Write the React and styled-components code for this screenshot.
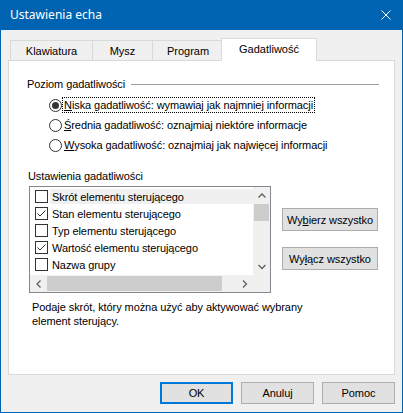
import React from "react";
import styled, { createGlobalStyle } from "styled-components";

const GlobalStyle = createGlobalStyle`
  html, body { margin: 0; padding: 0; background: #ffffff; }
  body {
    font-family: "Liberation Sans", Arial, sans-serif;
    font-size: 11px;
    color: #000;
  }
  * { box-sizing: border-box; }
`;

const Window = styled.div`
  width: 403px;
  height: 413px;
  border: 1px solid #0063b1;
  border-top: none;
  background: #f0f0f0;
  display: flex;
  flex-direction: column;
  overflow: hidden;
`;

const TitleBar = styled.div`
  height: 30px;
  flex-shrink: 0;
  background: #0063b1;
  color: #fff;
  display: flex;
  align-items: center;
  justify-content: space-between;
  padding: 0 11px 1px 9px;
  font-family: "Segoe UI", "Noto Sans", sans-serif;
  font-size: 12px;
`;

const Body = styled.div`
  flex: 1;
  display: flex;
  flex-direction: column;
  padding: 8px 7px 0 7px;
`;

const TabStrip = styled.div`
  display: flex;
  align-items: flex-end;
  height: 22px;
  padding-left: 2px;
`;

const Tab = styled.div`
  position: relative;
  z-index: ${(p) => (p.$sel ? 1 : 0)};
  width: ${(p) => p.$w}px;
  height: ${(p) => (p.$sel ? 23 : 20)}px;
  margin-left: ${(p) => (p.$sel ? -3 : -1)}px;
  margin-right: ${(p) => (p.$sel ? -2 : 0)}px;
  margin-bottom: ${(p) => (p.$sel ? -1 : 0)}px;
  padding-bottom: ${(p) => (p.$sel ? 3 : 0)}px;
  border: 1px solid #d9d9d9;
  border-bottom: none;
  background: ${(p) => (p.$sel ? "#ffffff" : "#f0f0f0")};
  display: flex;
  align-items: center;
  justify-content: center;
  white-space: nowrap;
  &:first-child { margin-left: 0; }
`;

const Panel = styled.div`
  height: 315px;
  flex-shrink: 0;
  background: #fff;
  border: 1px solid #d9d9d9;
  display: flex;
  flex-direction: column;
  padding: 0 15px 0 18px;
  letter-spacing: -0.08px;
`;

const GroupHeader = styled.div`
  display: flex;
  align-items: center;
  height: 16px;
  margin-top: 15px;
`;

const GroupLine = styled.div`
  flex: 1;
  height: 1px;
  background: #a0a0a0;
  margin-left: 6px;
`;

const RadioList = styled.div`
  display: flex;
  flex-direction: column;
  margin-top: 3px;
  padding-left: 22px;
`;

const RadioRow = styled.div`
  height: 20px;
  display: flex;
  align-items: center;
`;

const RadioCircle = styled.span`
  width: 13px;
  height: 13px;
  border-radius: 50%;
  border: 1px solid #333;
  background: #fff;
  flex-shrink: 0;
  margin-right: 1px;
  display: flex;
  align-items: center;
  justify-content: center;
  &::after {
    content: "";
    display: ${(p) => (p.$on ? "block" : "none")};
    width: 7px;
    height: 7px;
    border-radius: 50%;
    background: #333;
  }
`;

const RadioText = styled.span`
  padding: 0 1px;
  line-height: 14px;
  white-space: nowrap;
  outline: ${(p) => (p.$focus ? "1px dotted #000" : "none")};
`;

const SectionLabel = styled.div`
  margin-top: 14px;
  line-height: 14px;
  padding-left: 1px;
`;

const ListArea = styled.div`
  display: flex;
  margin-top: 3px;
`;

const ListBox = styled.div`
  width: 242px;
  height: 107px;
  margin-left: 2px;
  border: 1px solid #828790;
  background: #fff;
  display: grid;
  grid-template-columns: 1fr 17px;
  grid-template-rows: 1fr 17px;
  flex-shrink: 0;
`;

const Items = styled.div`
  overflow: hidden;
  padding-top: 1px;
`;

const ItemRow = styled.div`
  height: 17px;
  display: flex;
  align-items: center;
  padding-left: 5px;
`;

const CheckBox = styled.span`
  width: 13px;
  height: 13px;
  border: 1px solid #333;
  background: #fff;
  flex-shrink: 0;
  margin-right: 2px;
  display: flex;
  align-items: center;
  justify-content: center;
`;

const ItemText = styled.span`
  flex: 1;
  height: 15px;
  display: flex;
  align-items: center;
  padding-left: 2px;
  white-space: nowrap;
  background: ${(p) => (p.$sel ? "#f0f0f0" : "transparent")};
`;

const VScroll = styled.div`
  background: #f0f0f0;
  display: flex;
  flex-direction: column;
`;

const HScroll = styled.div`
  background: #f0f0f0;
  display: flex;
`;

const Corner = styled.div`
  background: #f0f0f0;
`;

const Arrow = styled.div`
  width: 17px;
  height: 17px;
  flex-shrink: 0;
  display: flex;
  align-items: center;
  justify-content: center;
`;

const Thumb = styled.div`
  background: #cdcdcd;
  ${(p) =>
    p.$vertical
      ? `height: 17px; margin: 0 1px;`
      : `width: 175px; margin: 1px 0;`}
`;

const Spacer = styled.div`
  flex: 1;
`;

const SideButtons = styled.div`
  display: flex;
  flex-direction: column;
  gap: 16px;
  padding-top: 22px;
  margin-left: 11px;
`;

const Button = styled.button`
  width: ${(p) => p.$w}px;
  height: ${(p) => p.$h}px;
  padding: 0;
  background: #e1e1e1;
  border: ${(p) => (p.$default ? "2px solid #0078d7" : "1px solid #adadad")};
  font-family: "Liberation Sans", Arial, sans-serif;
  font-size: 11px;
  letter-spacing: -0.08px;
  color: #000;
  white-space: nowrap;
`;

const Description = styled.p`
  margin: 7px 0 0 5px;
  line-height: 14px;
`;

const Footer = styled.div`
  display: flex;
  justify-content: flex-end;
  gap: 8px;
  padding-top: 7px;
`;

const Chevron = ({ dir }) => {
  const pts = {
    up: "0.5,4.5 4,1 7.5,4.5",
    down: "0.5,1 4,4.5 7.5,1",
    left: "4.5,0.5 1,4 4.5,7.5",
    right: "1,0.5 4.5,4 1,7.5",
  }[dir];
  const vert = dir === "up" || dir === "down";
  return (
    <svg width={vert ? 8 : 6} height={vert ? 6 : 8} viewBox={vert ? "0 0 8 6" : "0 0 6 8"}>
      <polyline points={pts} fill="none" stroke="#606060" strokeWidth="1.3" />
    </svg>
  );
};

const CheckMark = () => (
  <svg width="11" height="11" viewBox="0 0 11 11">
    <polyline points="1.5,5.5 4,8 9.5,2.5" fill="none" stroke="#333" strokeWidth="1" />
  </svg>
);

const tabs = [
  { label: "Klawiatura", w: 83 },
  { label: "Mysz", w: 61 },
  { label: "Program", w: 72 },
  { label: "Gadatliwość", w: 96, sel: true },
];

const radios = [
  { key: "N", rest: "iska gadatliwość: wymawiaj jak najmniej informacji", on: true },
  { key: "Ś", rest: "rednia gadatliwość: oznajmiaj niektóre informacje" },
  { key: "W", rest: "ysoka gadatliwość: oznajmiaj jak najwięcej informacji" },
];

const items = [
  { label: "Skrót elementu sterującego", checked: false, sel: true },
  { label: "Stan elementu sterującego", checked: true },
  { label: "Typ elementu sterującego", checked: false },
  { label: "Wartość elementu sterującego", checked: true },
  { label: "Nazwa grupy", checked: false },
  { label: "", checked: false },
];

export default function App() {
  return (
    <>
      <GlobalStyle />
      <Window>
        <TitleBar>
          <span>Ustawienia echa</span>
          <svg width="10" height="10" viewBox="0 0 10 10">
            <path d="M0.5 0.5 L9.5 9.5 M9.5 0.5 L0.5 9.5" stroke="#fff" strokeWidth="1" />
          </svg>
        </TitleBar>
        <Body>
          <TabStrip>
            {tabs.map((t) => (
              <Tab key={t.label} $w={t.w} $sel={t.sel}>
                {t.label}
              </Tab>
            ))}
          </TabStrip>
          <Panel>
            <GroupHeader>
              <span>Poziom gadatliwości</span>
              <GroupLine />
            </GroupHeader>
            <RadioList>
              {radios.map((r) => (
                <RadioRow key={r.key}>
                  <RadioCircle $on={r.on} />
                  <RadioText $focus={r.on}>
                    <u>{r.key}</u>
                    {r.rest}
                  </RadioText>
                </RadioRow>
              ))}
            </RadioList>
            <SectionLabel>Ustawienia gadatliwości</SectionLabel>
            <ListArea>
              <ListBox>
                <Items>
                  {items.map((it, i) => (
                    <ItemRow key={i}>
                      <CheckBox>{it.checked && <CheckMark />}</CheckBox>
                      <ItemText $sel={it.sel}>{it.label}</ItemText>
                    </ItemRow>
                  ))}
                </Items>
                <VScroll>
                  <Arrow>
                    <Chevron dir="up" />
                  </Arrow>
                  <Thumb $vertical />
                  <Spacer />
                  <Arrow>
                    <Chevron dir="down" />
                  </Arrow>
                </VScroll>
                <HScroll>
                  <Arrow>
                    <Chevron dir="left" />
                  </Arrow>
                  <Thumb />
                  <Spacer />
                  <Arrow>
                    <Chevron dir="right" />
                  </Arrow>
                </HScroll>
                <Corner />
              </ListBox>
              <SideButtons>
                <Button $w={96} $h={23}>
                  Wy<u>b</u>ierz wszystko
                </Button>
                <Button $w={96} $h={23}>
                  Wy<u>ł</u>ącz wszystko
                </Button>
              </SideButtons>
            </ListArea>
            <Description>
              Podaje skrót, który można użyć aby aktywować wybrany
              <br />
              element sterujący.
            </Description>
          </Panel>
          <Footer>
            <Button $w={73} $h={22} $default>
              OK
            </Button>
            <Button $w={73} $h={22}>
              Anuluj
            </Button>
            <Button $w={73} $h={22}>
              Pomoc
            </Button>
          </Footer>
        </Body>
      </Window>
    </>
  );
}
